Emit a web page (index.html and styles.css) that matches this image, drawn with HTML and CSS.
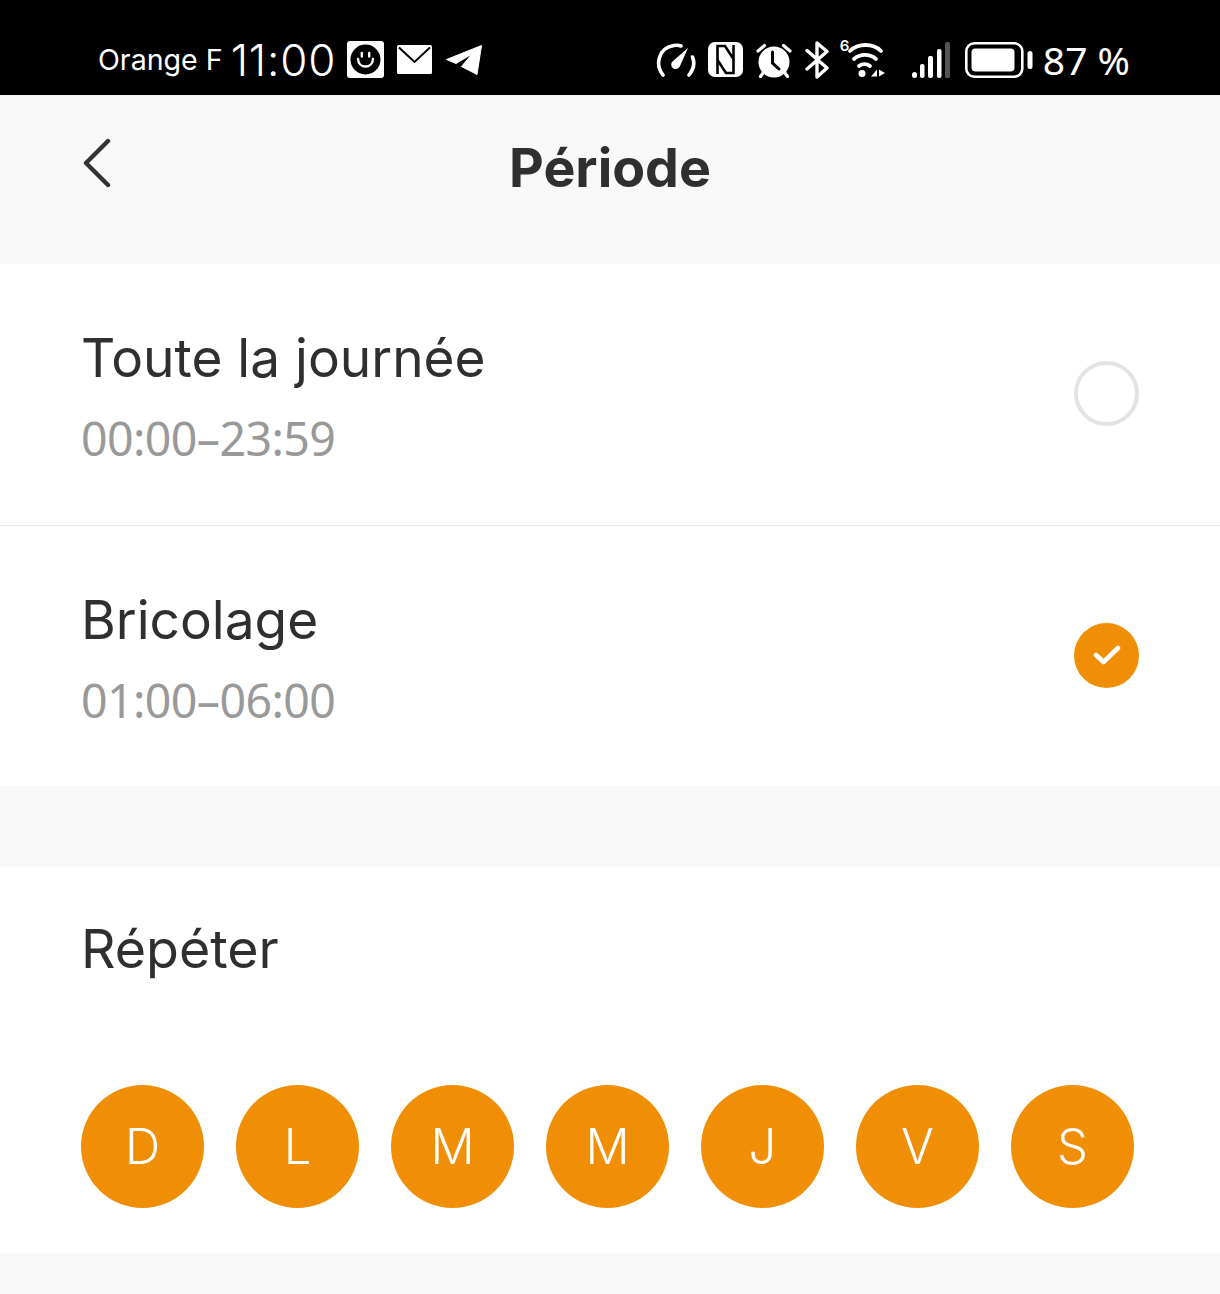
FILE: index.html
```html
<!DOCTYPE html>
<html lang="fr">
    <head>
        <meta charset="UTF-8" />
        <meta name="viewport" content="width=device-width, initial-scale=1.0" />
        <title>Période</title>
        <link rel="stylesheet" href="styles.css">
    </head>
    <body>
        <div class="status-bar">
            <div class="status-left">
                <span class="carrier">Orange F</span>
                <span class="clock">11:00</span>
                <svg class="icon-smile" width="37" height="37" viewBox="0 0 37 37">
                    <rect width="37" height="37" rx="3" fill="#fff" />
                    <circle cx="18.5" cy="18.5" r="15" fill="#000" />
                    <path d="M11 18c0.500 10 14.500 10 15 0" fill="none" stroke="#fff" stroke-width="2.400" stroke-linecap="round" />
                    <path d="M14.800 12v3.500M22.200 12v3.500" stroke="#fff" stroke-width="2.400" stroke-linecap="round" />
                </svg>
                <svg class="icon-mail" width="35" height="29" viewBox="0 0 35 29">
                    <rect width="35" height="29" rx="1.500" fill="#fff" />
                    <path d="M2 2.500L17.500 17L33 2.500" fill="none" stroke="#000" stroke-width="2" />
                </svg>
                <svg class="icon-send" width="36" height="30" viewBox="0 0 36 30">
                    <path d="M35.500 0.500L31 29.500L15.500 21.500L26 9L10 18.500L0.500 14.500Z" fill="#fff" stroke="#fff" stroke-linejoin="round" />
                </svg>
            </div>
            <div class="status-right">
                <svg class="icon-speed" width="40" height="36" viewBox="0 0 40 36">
                    <path d="M7 33C-1 23 2 6 18 3.500C21 3 23 3.300 25 4" fill="none" stroke="#fff" stroke-width="3.600" stroke-linecap="round" />
                    <path d="M33 33C37 28 39 21 36.500 15" fill="none" stroke="#fff" stroke-width="3.600" stroke-linecap="round" />
                    <path d="M32 6L24 24A4.500 4.500 0 1 1 17 19Z" fill="#fff" />
                </svg>
                <svg class="icon-nfc" width="35" height="35" viewBox="0 0 35 35">
                    <rect width="35" height="35" rx="7" fill="#fff" />
                    <path d="M9.500 32V4H17L25.500 17" fill="none" stroke="#000" stroke-width="2.600" />
                    <path d="M25.500 3V31H18L9.500 18" fill="none" stroke="#000" stroke-width="2.600" />
                </svg>
                <svg class="icon-alarm" width="38" height="36" viewBox="0 0 38 36">
                    <circle cx="19" cy="20" r="15.500" fill="#fff" />
                    <path d="M3 9L9.500 3.500M35 9L28.500 3.500M8 31L5.500 34.500M30 31L32.500 34.500" stroke="#fff" stroke-width="3.200" stroke-linecap="round" />
                    <path d="M17.500 10V21L24 27" fill="none" stroke="#000" stroke-width="3" stroke-linecap="round" />
                </svg>
                <svg class="icon-bt" width="25" height="38" viewBox="0 0 25 38">
                    <path d="M2 9.500L22 27L12 36V2L22 10.500L2 28" fill="none" stroke="#fff" stroke-width="3.400" stroke-linejoin="round" stroke-linecap="round" />
                </svg>
                <div class="wifi">
                    <span class="wifi-six">6</span>
                    <svg width="45" height="39" viewBox="0 0 45 39">
                        <path d="M10 11C18 3 33 3 41 11" fill="none" stroke="#fff" stroke-width="3.800" stroke-linecap="round" />
                        <path d="M14 19C20 13.500 30 13.500 36 19" fill="none" stroke="#fff" stroke-width="3.800" stroke-linecap="round" />
                        <path d="M19 26C22 23.500 27 23.500 30 26" fill="none" stroke="#fff" stroke-width="3.800" stroke-linecap="round" />
                        <circle cx="22" cy="33.500" r="3.500" fill="#fff" />
                        <path d="M31 36.500L37 29.500V36.500ZM39 29.500L45 33L39 36.500Z" fill="#fff" />
                    </svg>
                </div>
                <svg class="icon-signal" width="38" height="36" viewBox="0 0 38 36">
                    <rect x="0" y="30" width="5" height="6" rx="2.500" fill="#fff" />
                    <rect x="8" y="22" width="4.500" height="14" rx="2" fill="#fff" />
                    <rect x="16" y="14" width="5" height="22" rx="2" fill="#fff" />
                    <rect x="25" y="7" width="4.500" height="29" rx="2" fill="#fff" />
                    <rect x="33" y="0" width="5" height="36" rx="1.500" fill="#555" />
                </svg>
                <svg class="icon-battery" width="68" height="36" viewBox="0 0 68 36">
                    <rect x="1.300" y="1.300" width="56" height="33.400" rx="8" fill="none" stroke="#fff" stroke-width="2.600" />
                    <rect x="6.500" y="6.500" width="43" height="23" rx="4" fill="#fff" />
                    <rect x="62.500" y="9" width="5" height="18" rx="2.500" fill="#fff" />
                </svg>
                <span class="battery-level">87 %</span>
            </div>
        </div>

        <header class="page-header">
            <svg class="back-icon" width="30" height="50" viewBox="0 0 30 50">
                <path d="M26 3L4 25L26 47" fill="none" stroke="#333" stroke-width="4.400" stroke-linecap="round" stroke-linejoin="round" />
            </svg>
            <h1 class="page-title">Période</h1>
        </header>

        <section class="period-list">
            <div class="period-row">
                <div class="period-text">
                    <div class="period-name">Toute la journée</div>
                    <div class="period-time">00:00–23:59</div>
                </div>
                <div class="radio"></div>
            </div>
            <div class="period-row">
                <div class="period-text">
                    <div class="period-name">Bricolage</div>
                    <div class="period-time">01:00–06:00</div>
                </div>
                <div class="radio radio-on">
                    <svg width="28" height="22" viewBox="0 0 28 22">
                        <path d="M3 11L10.500 18L25 4" fill="none" stroke="#fff" stroke-width="4.600" stroke-linecap="round" stroke-linejoin="round" />
                    </svg>
                </div>
            </div>
        </section>

        <section class="repeat">
            <div class="repeat-title">Répéter</div>
            <div class="days">
                <div class="day">D</div>
                <div class="day">L</div>
                <div class="day">M</div>
                <div class="day">M</div>
                <div class="day">J</div>
                <div class="day">V</div>
                <div class="day">S</div>
            </div>
        </section>
    </body>
</html>
```

FILE: styles.css
```css
body {
    margin: 0;
    height: 1294px;
    overflow: hidden;
    background-color: #f8f8f8;
    font-family: Inter, "Noto Sans", Arial, sans-serif;
    color: #333;
}

svg {
    display: block;
    flex: none;
}

.status-bar {
    height: 95px;
    box-sizing: border-box;
    padding: 0 90px 0 98px;
    display: flex;
    justify-content: space-between;
    align-items: center;
    background-color: #000;
    color: #fff;
}

.status-left,
.status-right {
    display: flex;
    align-items: center;
    height: 38px;
    margin-top: 24px;
}

.carrier {
    font-size: 28.6px;
    margin-right: 8px;
}

.clock {
    font-size: 44px;
    margin-right: 11px;
    font-weight: 350;
    letter-spacing: 0.8px;
}

.icon-mail {
    margin-left: 13px;
}

.icon-send {
    margin-left: 14px;
}

.status-right svg,
.wifi {
    margin-right: 12px;
}

.status-right .icon-bt {
    margin-right: 10px;
}

.wifi {
    position: relative;
    margin-right: 27px;
}

.wifi svg {
    margin-right: 0;
}

.wifi-six {
    position: absolute;
    left: 0;
    top: -3px;
    font-size: 15px;
    line-height: 18px;
    font-weight: 600;
}

.status-right .icon-signal {
    margin-right: 15px;
}

.status-right .icon-battery {
    margin-right: 10px;
}

.battery-level {
    font-family: "Noto Sans", Arial, sans-serif;
    font-size: 39px;
}

.page-header {
    height: 169px;
    position: relative;
}

.back-icon {
    position: absolute;
    left: 82px;
    top: 43px;
}

.page-title {
    margin: 0;
    padding-top: 38px;
    text-align: center;
    font-size: 53.7px;
    line-height: 70px;
    font-weight: 700;
    color: #2f2f2f;
}

.period-list {
    background-color: #fff;
    margin-bottom: 81px;
}

.period-row {
    height: 261px;
    box-sizing: border-box;
    padding: 0 81px;
    display: flex;
    justify-content: space-between;
    align-items: center;
}

.period-row + .period-row {
    border-top: 1px solid #e8e8e8;
}

.period-row + .period-row .period-text {
    padding-top: 2px;
}

.period-name {
    font-size: 53.2px;
    line-height: 72px;
    font-weight: 385;
    color: #2f2f2f;
}

.period-time {
    font-family: "Noto Sans", Arial, sans-serif;
    font-size: 46.5px;
    line-height: 60px;
    margin-top: 14px;
    letter-spacing: -0.6px;
    color: #999;
}

.radio {
    width: 65px;
    height: 65px;
    margin-bottom: 2px;
    box-sizing: border-box;
    border: 4px solid #e3e3e3;
    border-radius: 50%;
    display: flex;
    justify-content: center;
    align-items: center;
}

.radio-on {
    border: none;
    background-color: #f08e05;
}

.repeat {
    height: 386px;
    box-sizing: border-box;
    padding: 46px 81px 0;
    background-color: #fff;
}

.repeat-title {
    font-size: 53.7px;
    line-height: 72px;
    font-weight: 385;
    color: #2f2f2f;
}

.days {
    display: flex;
    gap: 32px;
    margin-top: 100px;
}

.day {
    width: 123px;
    height: 123px;
    border-radius: 50%;
    background-color: #f08e05;
    color: #fff;
    font-size: 49px;
    font-weight: 330;
    display: flex;
    justify-content: center;
    align-items: center;
}
```
